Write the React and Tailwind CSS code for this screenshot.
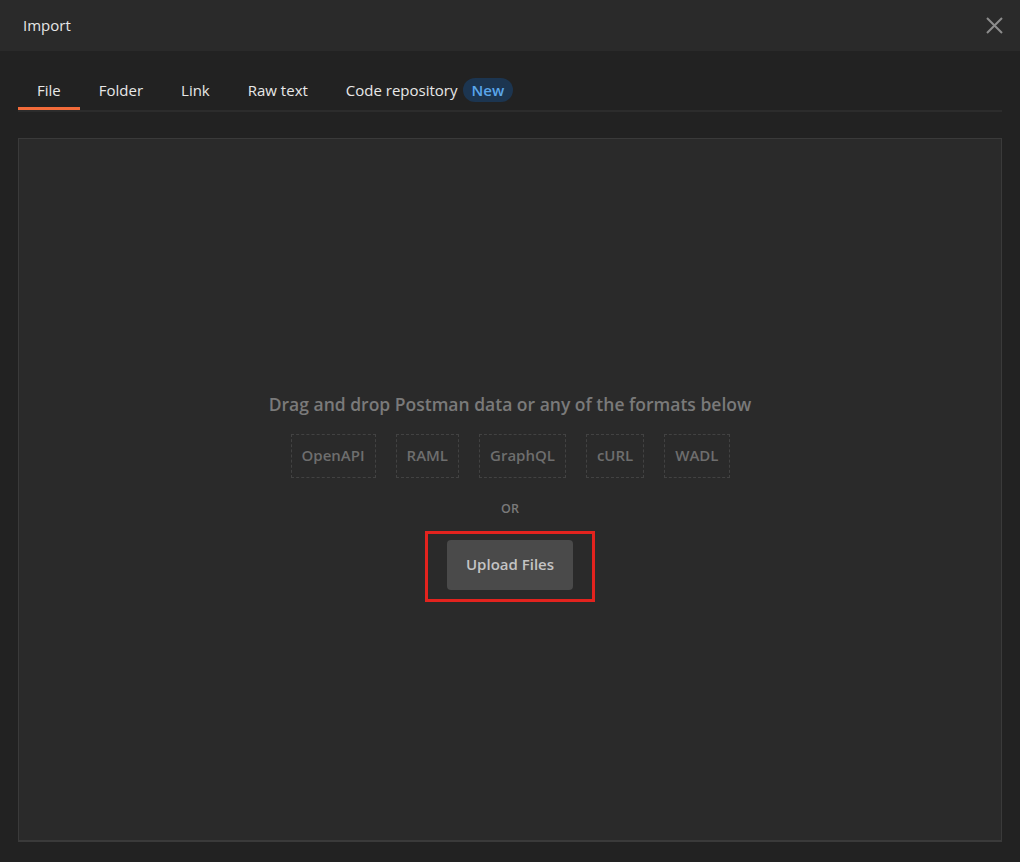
export default function App() {
  const tabs = ['File', 'Folder', 'Link', 'Raw text']
  const formats = ['OpenAPI', 'RAML', 'GraphQL', 'cURL', 'WADL']

  return (
    <div className="flex h-[862px] w-[1020px] flex-col bg-[#222222] font-['Open_Sans',sans-serif]">
      <header className="flex h-[51px] shrink-0 items-center justify-between bg-[#2a2a2a] pl-[23px] pr-[16px]">
        <h1 className="text-[15px] text-[#e6e6e6]">Import</h1>
        <button type="button" className="flex h-[20px] w-[20px] items-center justify-center text-[#8c8c8c]">
          <svg width="17" height="17" viewBox="0 0 17 17" fill="none" stroke="currentColor" strokeWidth="2">
            <path d="M1 1L16 16M16 1L1 16" />
          </svg>
        </button>
      </header>

      <div className="flex flex-1 flex-col px-[18px] pb-[20px] pt-[23px]">
        <nav className="flex border-b-2 border-[#2c2c2c]">
          {tabs.map((tab, i) => (
            <button
              key={tab}
              type="button"
              className={`h-[36px] border-b-[3px] px-[19px] text-[15px] leading-[33px] text-[#e8e8e8] ${i === 0 ? 'border-[#f26b3a]' : 'border-transparent'}`}
            >
              {tab}
            </button>
          ))}
          <button type="button" className="flex h-[36px] items-start gap-[5px] border-b-[3px] border-transparent px-[19px] text-[15px] leading-[33px] text-[#e8e8e8]">
            Code repository
            <span className="mt-[4px] rounded-full bg-[#1c3550] px-[9px] text-[15px] font-semibold leading-[24px] text-[#5aa6ea]">New</span>
          </button>
        </nav>

        <div className="mt-[26px] flex flex-1 flex-col items-center justify-center border border-b-2 border-[#3a3a3a] bg-[#2a2a2a] pt-[14px]">
          <p className="text-[17.5px] font-semibold leading-[24px] text-[#7a7a7a]">Drag and drop Postman data or any of the formats below</p>
          <div className="mt-[18px] flex gap-[20px]">
            {formats.map((format) => (
              <span
                key={format}
                className="flex h-[44px] items-center border border-dashed border-[#424242] px-[10px] text-[15px] font-semibold text-[#6e6e6e]"
              >
                {format}
              </span>
            ))}
          </div>
          <p className="mt-[23px] text-[12.5px] font-semibold leading-[16px] text-[#7a7a7a]">OR</p>
          <div className="mt-[14px] border-[3px] border-[#e3231e] px-[19px] pb-[9px] pt-[6px]">
            <button type="button" className="h-[50px] rounded-[4px] bg-[#4a4a4a] px-[19px] text-[15px] font-semibold text-[#c4c4c4]">
              Upload Files
            </button>
          </div>
        </div>
      </div>
    </div>
  )
}
